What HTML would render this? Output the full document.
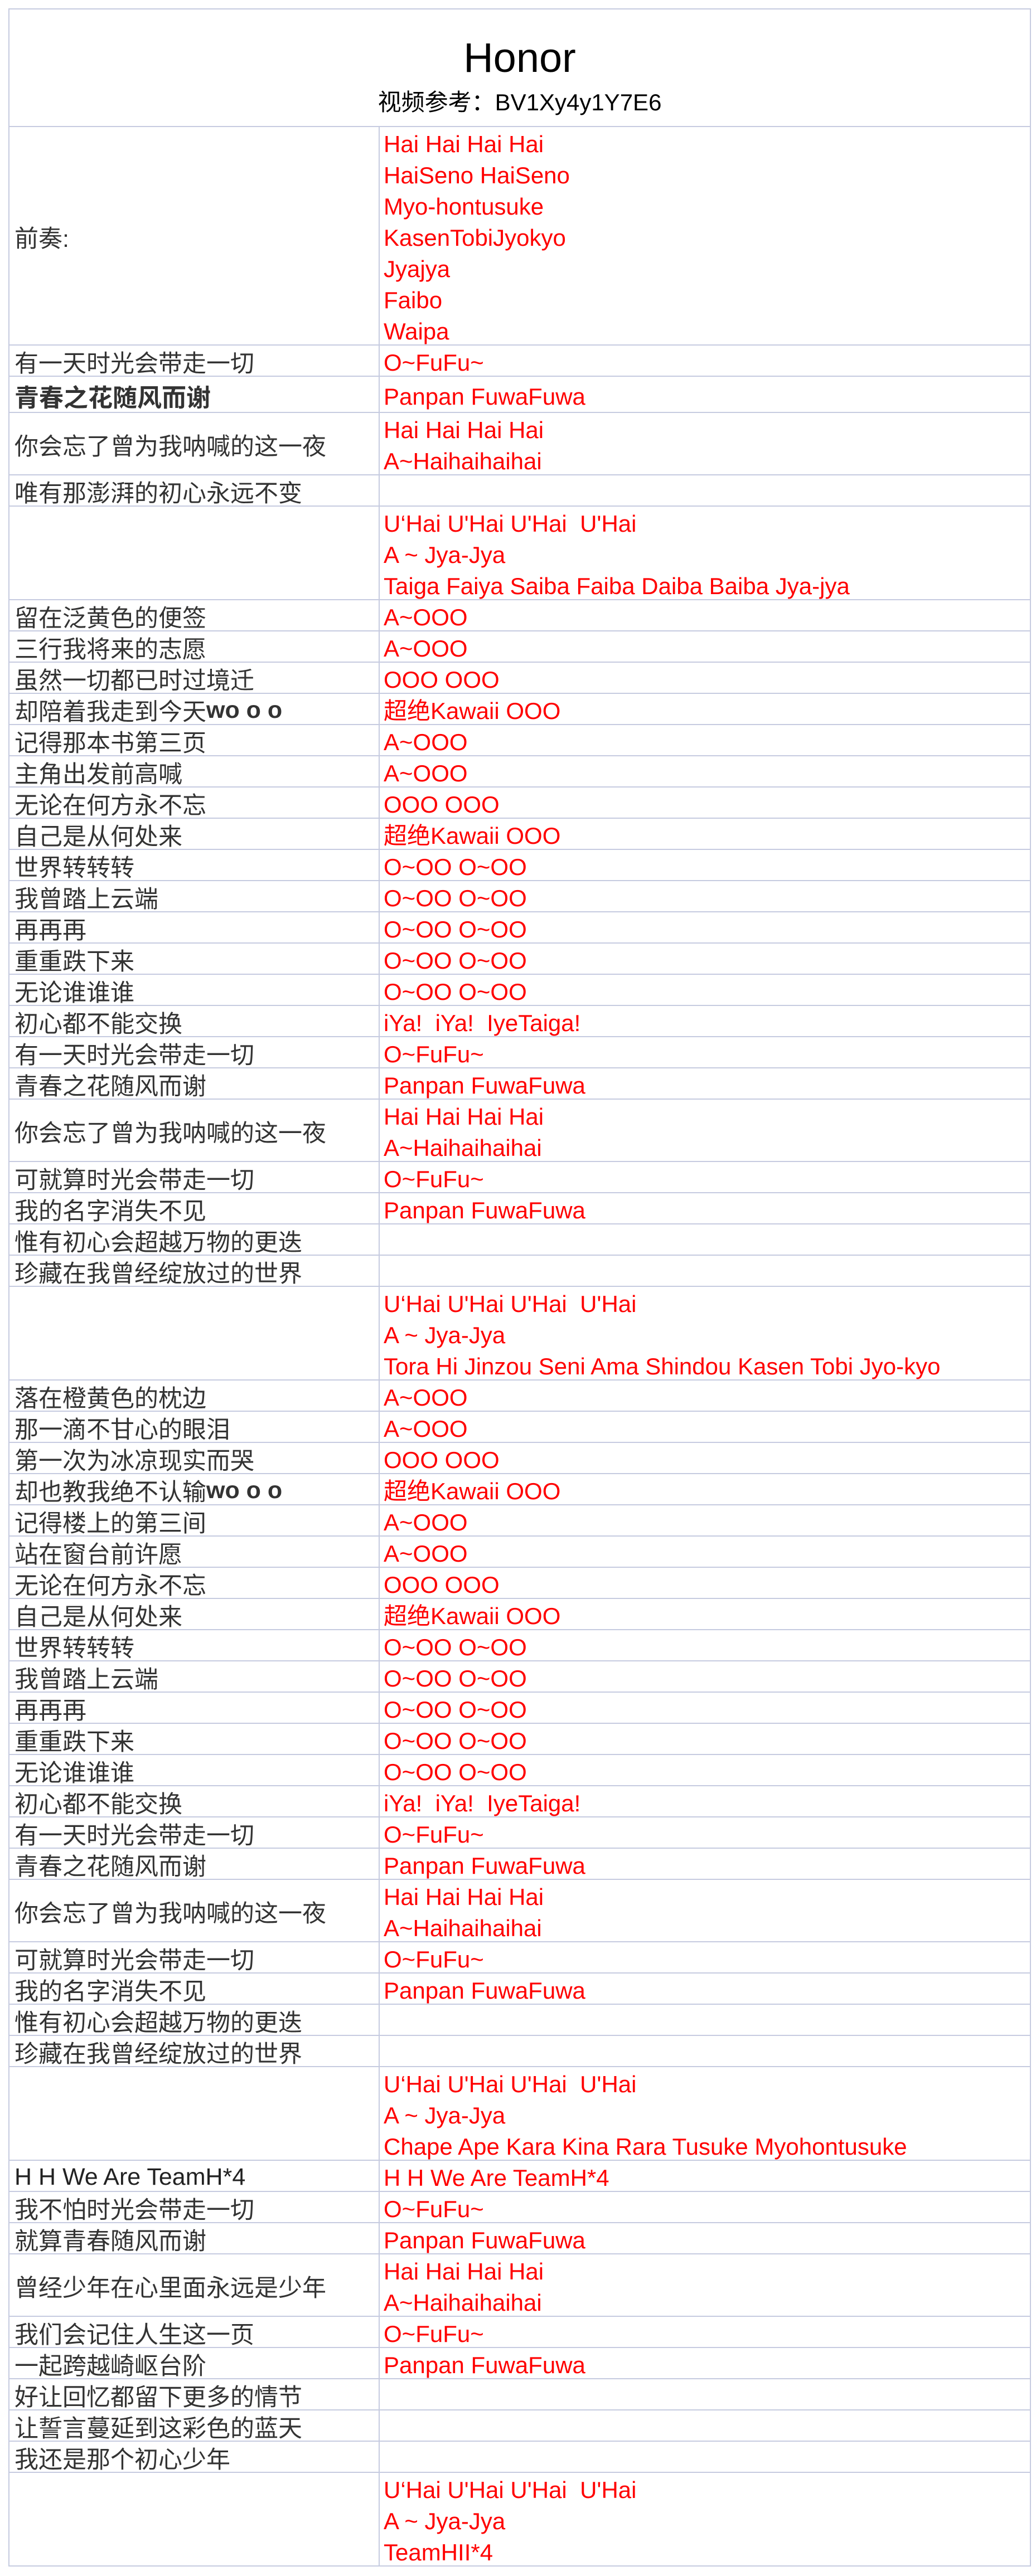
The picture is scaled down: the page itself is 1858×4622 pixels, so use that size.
<!DOCTYPE html>
<html><head><meta charset="utf-8">
<style>
html,body{margin:0;padding:0;background:#fff;}
body{width:1858px;height:4622px;position:relative;overflow:hidden;}
.t{position:absolute;left:15px;top:15px;width:1834px;border:2px solid #c6cbe0;border-bottom:none;box-sizing:border-box;}
.r{display:flex;border-bottom:2px solid #c6cbe0;box-sizing:border-box;overflow:hidden;}
.l{width:664px;flex:none;border-right:2px solid #c6cbe0;box-sizing:border-box;display:flex;align-items:center;padding:4px 0 0 9px;font-family:"Liberation Sans","Noto Sans CJK SC",sans-serif;font-size:43px;color:#333;white-space:nowrap;}
.x{flex:1;padding:3px 0 0 7px;font-family:"Liberation Sans","Noto Sans CJK SC",sans-serif;font-size:42px;color:#ff0000;line-height:56px;white-space:nowrap;}
.b{font-weight:bold;color:#333;}
.h{text-align:center;flex:1;font-family:"Liberation Sans","Noto Sans CJK SC",sans-serif;color:#000;}
</style></head><body>
<div class="t">
<div class="r" style="height:211px"><div class="h"><div style="font-size:74px;line-height:74px;padding-top:50px">Honor</div><div style="font-size:42px;line-height:42px;padding-top:22px">视频参考：BV1Xy4y1Y7E6</div></div></div>
<div class="r" style="height:392px"><div class="l">前奏:</div><div class="x">Hai Hai Hai Hai<br>HaiSeno HaiSeno<br>Myo-hontusuke<br>KasenTobiJyokyo<br>Jyajya<br>Faibo<br>Waipa</div></div>
<div class="r" style="height:56px"><div class="l">有一天时光会带走一切</div><div class="x">O~FuFu~</div></div>
<div class="r" style="height:65px"><div class="l b" style="font-size:44px">青春之花随风而谢</div><div class="x" style="padding-top:8px">Panpan FuwaFuwa</div></div>
<div class="r" style="height:112px"><div class="l">你会忘了曾为我呐喊的这一夜</div><div class="x">Hai Hai Hai Hai<br>A~Haihaihaihai</div></div>
<div class="r" style="height:56px"><div class="l">唯有那澎湃的初心永远不变</div><div class="x"></div></div>
<div class="r" style="height:168px"><div class="l"></div><div class="x">U‘Hai U'Hai U'Hai&nbsp; U'Hai<br>A ~ Jya-Jya<br>Taiga Faiya Saiba Faiba Daiba Baiba Jya-jya</div></div>
<div class="r" style="height:56px"><div class="l">留在泛黄色的便签</div><div class="x">A~OOO</div></div>
<div class="r" style="height:56px"><div class="l">三行我将来的志愿</div><div class="x">A~OOO</div></div>
<div class="r" style="height:56px"><div class="l">虽然一切都已时过境迁</div><div class="x">OOO OOO</div></div>
<div class="r" style="height:56px"><div class="l">却陪着我走到今天<b>wo o o</b></div><div class="x">超绝Kawaii OOO</div></div>
<div class="r" style="height:56px"><div class="l">记得那本书第三页</div><div class="x">A~OOO</div></div>
<div class="r" style="height:56px"><div class="l">主角出发前高喊</div><div class="x">A~OOO</div></div>
<div class="r" style="height:56px"><div class="l">无论在何方永不忘</div><div class="x">OOO OOO</div></div>
<div class="r" style="height:56px"><div class="l">自己是从何处来</div><div class="x">超绝Kawaii OOO</div></div>
<div class="r" style="height:56px"><div class="l">世界转转转</div><div class="x">O~OO O~OO</div></div>
<div class="r" style="height:56px"><div class="l">我曾踏上云端</div><div class="x">O~OO O~OO</div></div>
<div class="r" style="height:56px"><div class="l">再再再</div><div class="x">O~OO O~OO</div></div>
<div class="r" style="height:56px"><div class="l">重重跌下来</div><div class="x">O~OO O~OO</div></div>
<div class="r" style="height:56px"><div class="l">无论谁谁谁</div><div class="x">O~OO O~OO</div></div>
<div class="r" style="height:56px"><div class="l">初心都不能交换</div><div class="x">iYa!&nbsp; iYa!&nbsp; IyeTaiga!</div></div>
<div class="r" style="height:56px"><div class="l">有一天时光会带走一切</div><div class="x">O~FuFu~</div></div>
<div class="r" style="height:56px"><div class="l">青春之花随风而谢</div><div class="x">Panpan FuwaFuwa</div></div>
<div class="r" style="height:112px"><div class="l">你会忘了曾为我呐喊的这一夜</div><div class="x">Hai Hai Hai Hai<br>A~Haihaihaihai</div></div>
<div class="r" style="height:56px"><div class="l">可就算时光会带走一切</div><div class="x">O~FuFu~</div></div>
<div class="r" style="height:56px"><div class="l">我的名字消失不见</div><div class="x">Panpan FuwaFuwa</div></div>
<div class="r" style="height:56px"><div class="l">惟有初心会超越万物的更迭</div><div class="x"></div></div>
<div class="r" style="height:56px"><div class="l">珍藏在我曾经绽放过的世界</div><div class="x"></div></div>
<div class="r" style="height:168px"><div class="l"></div><div class="x">U‘Hai U'Hai U'Hai&nbsp; U'Hai<br>A ~ Jya-Jya<br>Tora Hi Jinzou Seni Ama Shindou Kasen Tobi Jyo-kyo</div></div>
<div class="r" style="height:56px"><div class="l">落在橙黄色的枕边</div><div class="x">A~OOO</div></div>
<div class="r" style="height:56px"><div class="l">那一滴不甘心的眼泪</div><div class="x">A~OOO</div></div>
<div class="r" style="height:56px"><div class="l">第一次为冰凉现实而哭</div><div class="x">OOO OOO</div></div>
<div class="r" style="height:56px"><div class="l">却也教我绝不认输<b>wo o o</b></div><div class="x">超绝Kawaii OOO</div></div>
<div class="r" style="height:56px"><div class="l">记得楼上的第三间</div><div class="x">A~OOO</div></div>
<div class="r" style="height:56px"><div class="l">站在窗台前许愿</div><div class="x">A~OOO</div></div>
<div class="r" style="height:56px"><div class="l">无论在何方永不忘</div><div class="x">OOO OOO</div></div>
<div class="r" style="height:56px"><div class="l">自己是从何处来</div><div class="x">超绝Kawaii OOO</div></div>
<div class="r" style="height:56px"><div class="l">世界转转转</div><div class="x">O~OO O~OO</div></div>
<div class="r" style="height:56px"><div class="l">我曾踏上云端</div><div class="x">O~OO O~OO</div></div>
<div class="r" style="height:56px"><div class="l">再再再</div><div class="x">O~OO O~OO</div></div>
<div class="r" style="height:56px"><div class="l">重重跌下来</div><div class="x">O~OO O~OO</div></div>
<div class="r" style="height:56px"><div class="l">无论谁谁谁</div><div class="x">O~OO O~OO</div></div>
<div class="r" style="height:56px"><div class="l">初心都不能交换</div><div class="x">iYa!&nbsp; iYa!&nbsp; IyeTaiga!</div></div>
<div class="r" style="height:56px"><div class="l">有一天时光会带走一切</div><div class="x">O~FuFu~</div></div>
<div class="r" style="height:56px"><div class="l">青春之花随风而谢</div><div class="x">Panpan FuwaFuwa</div></div>
<div class="r" style="height:112px"><div class="l">你会忘了曾为我呐喊的这一夜</div><div class="x">Hai Hai Hai Hai<br>A~Haihaihaihai</div></div>
<div class="r" style="height:56px"><div class="l">可就算时光会带走一切</div><div class="x">O~FuFu~</div></div>
<div class="r" style="height:56px"><div class="l">我的名字消失不见</div><div class="x">Panpan FuwaFuwa</div></div>
<div class="r" style="height:56px"><div class="l">惟有初心会超越万物的更迭</div><div class="x"></div></div>
<div class="r" style="height:56px"><div class="l">珍藏在我曾经绽放过的世界</div><div class="x"></div></div>
<div class="r" style="height:168px"><div class="l"></div><div class="x">U‘Hai U'Hai U'Hai&nbsp; U'Hai<br>A ~ Jya-Jya<br>Chape Ape Kara Kina Rara Tusuke Myohontusuke</div></div>
<div class="r" style="height:56px"><div class="l" style="color:#222">H H We Are TeamH*4</div><div class="x">H H We Are TeamH*4</div></div>
<div class="r" style="height:56px"><div class="l">我不怕时光会带走一切</div><div class="x">O~FuFu~</div></div>
<div class="r" style="height:56px"><div class="l">就算青春随风而谢</div><div class="x">Panpan FuwaFuwa</div></div>
<div class="r" style="height:112px"><div class="l">曾经少年在心里面永远是少年</div><div class="x">Hai Hai Hai Hai<br>A~Haihaihaihai</div></div>
<div class="r" style="height:56px"><div class="l">我们会记住人生这一页</div><div class="x">O~FuFu~</div></div>
<div class="r" style="height:56px"><div class="l">一起跨越崎岖台阶</div><div class="x">Panpan FuwaFuwa</div></div>
<div class="r" style="height:56px"><div class="l">好让回忆都留下更多的情节</div><div class="x"></div></div>
<div class="r" style="height:56px"><div class="l">让誓言蔓延到这彩色的蓝天</div><div class="x"></div></div>
<div class="r" style="height:56px"><div class="l">我还是那个初心少年</div><div class="x"></div></div>
<div class="r" style="height:168px"><div class="l"></div><div class="x">U‘Hai U'Hai U'Hai&nbsp; U'Hai<br>A ~ Jya-Jya<br>TeamHII*4</div></div>
</div>
</body></html>
